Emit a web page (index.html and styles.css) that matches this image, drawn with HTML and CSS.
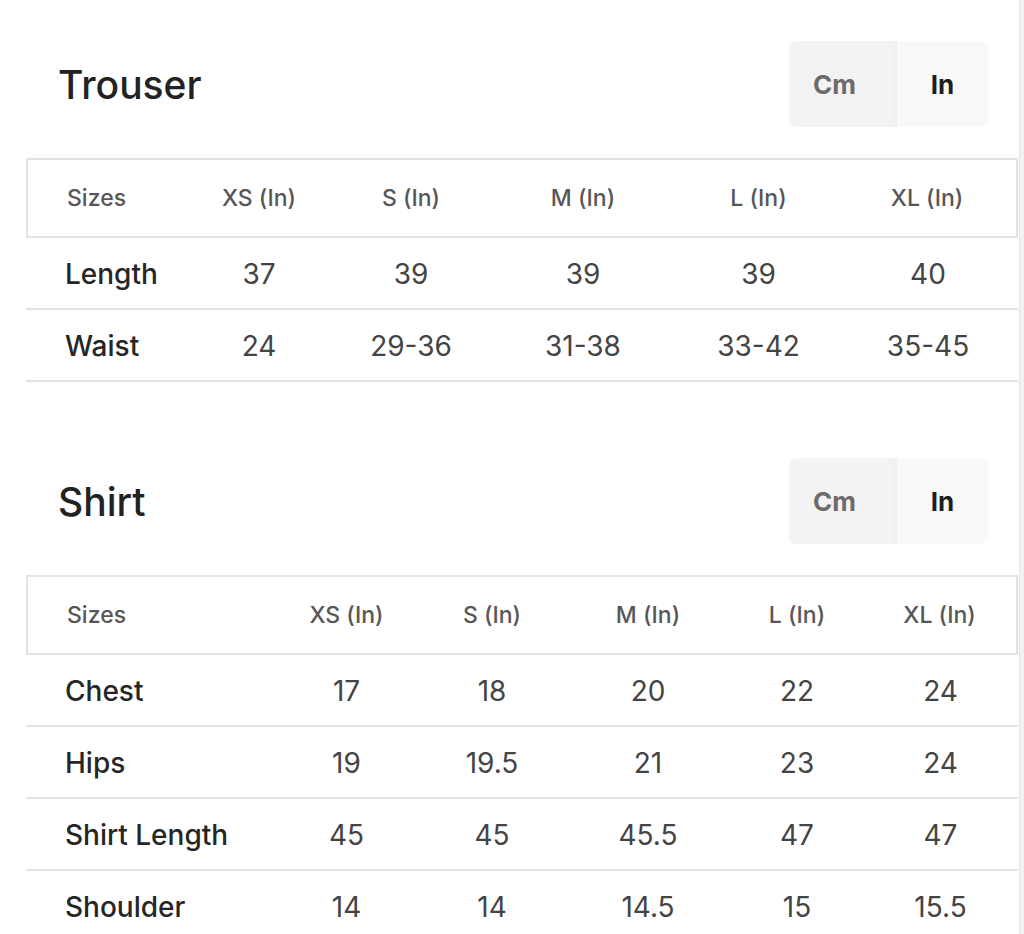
FILE: index.html
```html
<!DOCTYPE html>
<html lang="en">
<head>
<meta charset="utf-8">
<title>Size chart</title>
<link rel="stylesheet" href="styles.css">
</head>
<body>
<div class="page">
  <main class="main">
    <section class="chart chart-trouser">
      <div class="chart-head">
        <h2 class="chart-title">Trouser</h2>
        <div class="unit-toggle">
          <span class="unit">Cm</span>
          <span class="unit unit-active">In</span>
        </div>
      </div>
      <table class="size-table">
        <colgroup>
          <col class="t-c0"><col class="t-c1"><col class="t-c2"><col class="t-c3"><col class="t-c4"><col class="t-c5">
        </colgroup>
        <thead>
          <tr><th class="label-col">Sizes</th><th>XS (In)</th><th>S (In)</th><th>M (In)</th><th>L (In)</th><th>XL (In)</th></tr>
        </thead>
        <tbody>
          <tr><td class="label-col">Length</td><td>37</td><td>39</td><td>39</td><td>39</td><td>40</td></tr>
          <tr><td class="label-col">Waist</td><td>24</td><td>29-36</td><td>31-38</td><td>33-42</td><td>35-45</td></tr>
        </tbody>
      </table>
    </section>

    <section class="chart chart-shirt">
      <div class="chart-head">
        <h2 class="chart-title">Shirt</h2>
        <div class="unit-toggle">
          <span class="unit">Cm</span>
          <span class="unit unit-active">In</span>
        </div>
      </div>
      <table class="size-table">
        <colgroup>
          <col class="s-c0"><col class="s-c1"><col class="s-c2"><col class="s-c3"><col class="s-c4"><col class="s-c5">
        </colgroup>
        <thead>
          <tr><th class="label-col">Sizes</th><th>XS (In)</th><th>S (In)</th><th>M (In)</th><th>L (In)</th><th>XL (In)</th></tr>
        </thead>
        <tbody>
          <tr><td class="label-col">Chest</td><td>17</td><td>18</td><td>20</td><td>22</td><td>24</td></tr>
          <tr><td class="label-col">Hips</td><td>19</td><td>19.5</td><td>21</td><td>23</td><td>24</td></tr>
          <tr><td class="label-col">Shirt Length</td><td>45</td><td>45</td><td>45.5</td><td>47</td><td>47</td></tr>
          <tr><td class="label-col">Shoulder</td><td>14</td><td>14</td><td>14.5</td><td>15</td><td>15.5</td></tr>
        </tbody>
      </table>
    </section>
  </main>
  <div class="edge"></div>
</div>
</body>
</html>
```

FILE: styles.css
```css
* { box-sizing: border-box; }

html, body {
  margin: 0;
  padding: 0;
  background: #ffffff;
  font-family: Inter, "Noto Sans", "Liberation Sans", sans-serif;
  color: #222;
}

.page {
  display: flex;
  width: 1024px;
  height: 934px;
  overflow: hidden;
}

.main {
  width: 1019px;
  flex: none;
  padding-left: 26px;
  padding-right: 1px;
}

.edge {
  flex: 1;
  border-left: 1px solid #e6e6e6;
  background: #f2f2f2;
}

.chart-trouser { padding-top: 41px; }
.chart-shirt { padding-top: 76px; }

.chart-head {
  display: flex;
  align-items: center;
  justify-content: space-between;
  padding-left: 32px;
  padding-right: 30px;
  margin-bottom: 31px;
}

.chart-title {
  margin: 0;
  font-size: 39px;
  font-weight: 500;
  color: #222;
}

.unit-toggle {
  display: flex;
  justify-content: space-between;
  height: 86px;
  width: 199px;
  background: #f3f3f3;
  border-radius: 7px;
  overflow: hidden;
}

.unit {
  display: flex;
  align-items: center;
  justify-content: center;
  width: 91px;
  font-size: 26px;
  font-weight: 700;
  color: #6b6b6b;
}

.unit-active {
  color: #1e1e1e;
  background: #f9f9f9;
  box-shadow: -3px 0 8px rgba(0, 0, 0, 0.02);
}

.size-table {
  width: 992px;
  border-collapse: separate;
  border-spacing: 0;
  table-layout: fixed;
}

.size-table thead tr {
  height: 80px;
}

.size-table th {
  border-top: 2px solid #e3e3e3;
  border-bottom: 2px solid #e3e3e3;
  font-size: 23px;
  font-weight: 500;
  color: #575757;
  text-align: center;
  padding: 0;
}

.size-table th:first-child { border-left: 2px solid #e3e3e3; }
.size-table th:last-child { border-right: 2px solid #e3e3e3; }

.size-table tbody tr {
  height: 72px;
}

.size-table td {
  border-bottom: 2px solid #e3e3e3;
  font-size: 28px;
  font-weight: 400;
  color: #444;
  text-align: center;
  padding: 2px 0 0;
}

.size-table .label-col {
  text-align: left;
  padding-left: 39px;
}

.size-table td.label-col {
  font-weight: 500;
  color: #262626;
}

/* Trouser column widths */
.t-c0 { width: 157px; }
.t-c1 { width: 152px; }
.t-c2 { width: 152px; }
.t-c3 { width: 192px; }
.t-c4 { width: 159px; }
.t-c5 { width: 180px; }

/* Shirt column widths */
.s-c0 { width: 248px; }
.s-c1 { width: 145px; }
.s-c2 { width: 146px; }
.s-c3 { width: 166px; }
.s-c4 { width: 132px; }
.s-c5 { width: 155px; }
```
